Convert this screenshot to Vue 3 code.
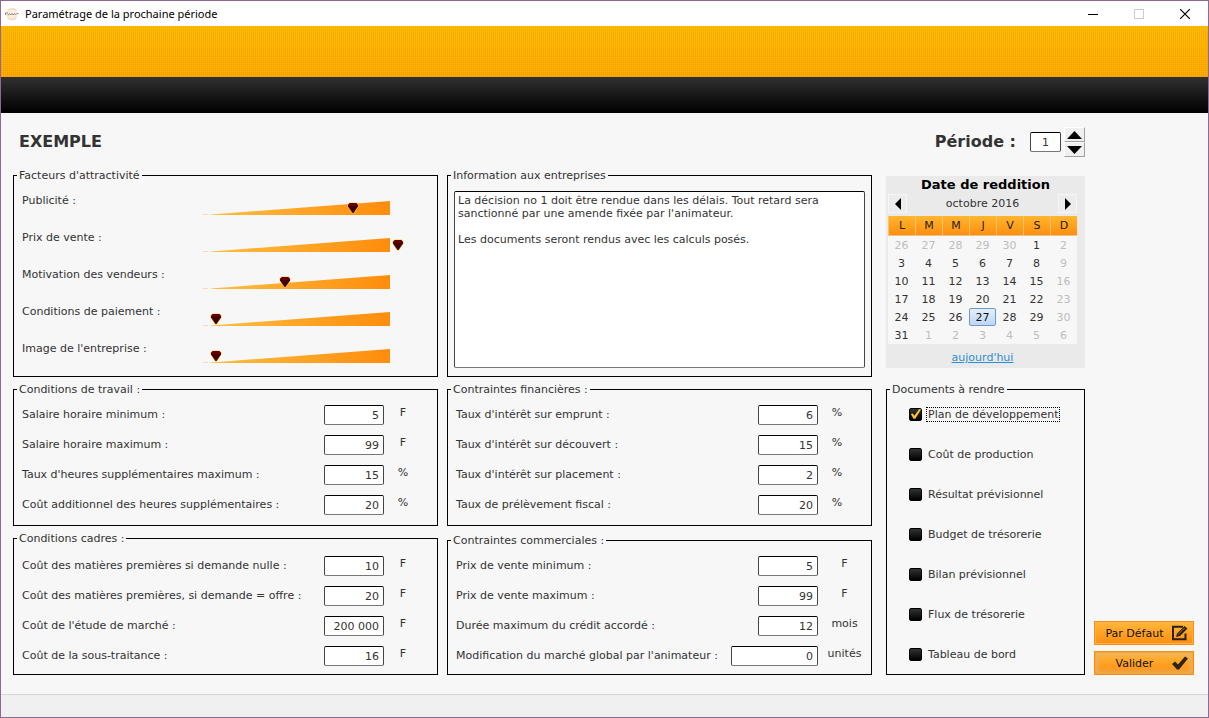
<script setup>
import { ref, reactive } from 'vue'

const period = ref(1)

const factors = reactive([
  { id: 'pub', label: 'Publicité :', value: 75 },
  { id: 'prix', label: 'Prix de vente :', value: 100 },
  { id: 'motiv', label: 'Motivation des vendeurs :', value: 38 },
  { id: 'paie', label: 'Conditions de paiement :', value: 0 },
  { id: 'image', label: "Image de l'entreprise :", value: 0 },
])

const info = ref(
  "La décision no 1 doit être rendue dans les délais. Tout retard sera sanctionné par une amende fixée par l'animateur.\n\nLes documents seront rendus avec les calculs posés."
)

const work = reactive([
  { id: 'smin', label: 'Salaire horaire minimum :', value: '5', unit: 'F' },
  { id: 'smax', label: 'Salaire horaire maximum :', value: '99', unit: 'F' },
  { id: 'hsup', label: "Taux d'heures supplémentaires maximum :", value: '15', unit: '%' },
  { id: 'csup', label: 'Coût additionnel des heures supplémentaires :', value: '20', unit: '%' },
])

const frame = reactive([
  { id: 'mp0', label: 'Coût des matières premières si demande nulle :', value: '10', unit: 'F' },
  { id: 'mp1', label: 'Coût des matières premières, si demande = offre :', value: '20', unit: 'F' },
  { id: 'etude', label: "Coût de l'étude de marché :", value: '200 000', unit: 'F' },
  { id: 'sst', label: 'Coût de la sous-traitance :', value: '16', unit: 'F' },
])

const finance = reactive([
  { id: 'emp', label: "Taux d'intérêt sur emprunt :", value: '6', unit: '%' },
  { id: 'dec', label: "Taux d'intérêt sur découvert :", value: '15', unit: '%' },
  { id: 'pla', label: "Taux d'intérêt sur placement :", value: '2', unit: '%' },
  { id: 'fisc', label: 'Taux de prélèvement fiscal :', value: '20', unit: '%' },
])

const trade = reactive([
  { id: 'pmin', label: 'Prix de vente minimum :', value: '5', unit: 'F' },
  { id: 'pmax', label: 'Prix de vente maximum :', value: '99', unit: 'F' },
  { id: 'cred', label: 'Durée maximum du crédit accordé :', value: '12', unit: 'mois' },
  { id: 'glob', label: "Modification du marché global par l'animateur :", value: '0', unit: 'unités', wide: true },
])

const documents = reactive([
  { id: 'plan', label: 'Plan de développement', checked: true, current: true },
  { id: 'cout', label: 'Coût de production', checked: false },
  { id: 'resu', label: 'Résultat prévisionnel', checked: false },
  { id: 'budg', label: 'Budget de trésorerie', checked: false },
  { id: 'bila', label: 'Bilan prévisionnel', checked: false },
  { id: 'flux', label: 'Flux de trésorerie', checked: false },
  { id: 'tabl', label: 'Tableau de bord', checked: false },
])

const weekdays = ['L', 'M', 'M', 'J', 'V', 'S', 'D']
const selectedDay = ref(27)

// October 2016: five days of September lead in, six of November follow.
const days = [
  ...[26, 27, 28, 29, 30].map((n) => ({ n, other: true })),
  ...Array.from({ length: 31 }, (_, i) => ({ n: i + 1, other: false })),
  ...[1, 2, 3, 4, 5, 6].map((n) => ({ n, other: true })),
]
const weeks = Array.from({ length: 6 }, (_, w) => days.slice(w * 7, w * 7 + 7))
</script>

<template>
  <div class="window">
    <header class="titlebar">
      <svg class="app-icon" viewBox="0 0 16 16" aria-hidden="true">
        <circle cx="8" cy="8" r="6" fill="#fbeee0" />
        <path d="M4 4.500A5.500 5.500 0 0 1 12.500 5M3.500 11.500A5.500 5.500 0 0 0 12.500 11" fill="none" stroke="#f6dcc0" stroke-width="1.500" />
        <path d="M1.500 9V7H4M4 9.500L5.500 7.500L6.500 9L8 7.500L9 9L10.500 7.500L11.500 9L13 7.500H14.500" fill="none" stroke="#8d8682" stroke-width="1" />
      </svg>
      <h1 class="window-title">Paramétrage de la prochaine période</h1>
      <button class="win-btn" type="button" aria-label="Réduire">
        <svg viewBox="0 0 10 10"><path d="M0 5.500H10" stroke="#000" fill="none" /></svg>
      </button>
      <button class="win-btn" type="button" aria-label="Agrandir" disabled>
        <svg viewBox="0 0 10 10"><rect x="0.500" y="0.500" width="9" height="9" stroke="#ccc" fill="none" /></svg>
      </button>
      <button class="win-btn" type="button" aria-label="Fermer">
        <svg viewBox="0 0 10 10"><path d="M0 0L10 10M10 0L0 10" stroke="#000" stroke-width="1.200" fill="none" /></svg>
      </button>
    </header>
    <div class="band-gold"></div>
    <div class="band-dark"></div>

    <main class="content">
      <div class="heading">
        <h2 class="heading-text">EXEMPLE</h2>
        <div class="period">
          <label class="heading-text" for="period">Période :</label>
          <input id="period" v-model="period" class="field period-field" type="text" />
          <div class="spinner">
            <button type="button" aria-label="Période suivante" @click="period++">
              <svg viewBox="0 0 15 8"><path d="M7.500 0L15 8H0Z" /></svg>
            </button>
            <button type="button" aria-label="Période précédente" @click="period--">
              <svg viewBox="0 0 15 8"><path d="M0 0H15L7.500 8Z" /></svg>
            </button>
          </div>
        </div>
      </div>

      <div class="stack">
        <fieldset class="panel panel-factors">
          <legend>Facteurs d'attractivité</legend>
          <div v-for="f in factors" :key="f.id" class="factor">
            <label :for="f.id">{{ f.label }}</label>
            <div class="slider">
              <svg class="wedge" viewBox="0 0 187 14" aria-hidden="true">
                <defs>
                  <linearGradient :id="'g-' + f.id" x1="0" x2="1">
                    <stop offset="0" stop-color="#ffbe40" />
                    <stop offset="1" stop-color="#ff8c0c" />
                  </linearGradient>
                </defs>
                <rect x="0" y="13" width="5" height="1" fill="#fbdcae" />
                <path d="M8 13.400L187 0V14H8Z" :fill="'url(#g-' + f.id + ')'" />
              </svg>
              <input :id="f.id" v-model="f.value" type="range" min="0" max="100" />
            </div>
          </div>
        </fieldset>

        <fieldset class="panel">
          <legend>Conditions de travail :</legend>
          <div v-for="r in work" :key="r.id" class="row">
            <label :for="r.id">{{ r.label }}</label>
            <input :id="r.id" v-model="r.value" class="field" type="text" />
            <span class="unit">{{ r.unit }}</span>
          </div>
        </fieldset>

        <fieldset class="panel panel-last panel-roomy">
          <legend>Conditions cadres :</legend>
          <div v-for="r in frame" :key="r.id" class="row">
            <label :for="r.id">{{ r.label }}</label>
            <input :id="r.id" v-model="r.value" class="field" type="text" />
            <span class="unit">{{ r.unit }}</span>
          </div>
        </fieldset>
      </div>

      <div class="stack">
        <fieldset class="panel panel-info">
          <legend>Information aux entreprises</legend>
          <textarea v-model="info" aria-label="Information aux entreprises" spellcheck="false"></textarea>
        </fieldset>

        <fieldset class="panel">
          <legend>Contraintes financières :</legend>
          <div v-for="r in finance" :key="r.id" class="row">
            <label :for="r.id">{{ r.label }}</label>
            <input :id="r.id" v-model="r.value" class="field" type="text" />
            <span class="unit">{{ r.unit }}</span>
          </div>
        </fieldset>

        <fieldset class="panel panel-last">
          <legend>Contraintes commerciales :</legend>
          <div v-for="r in trade" :key="r.id" class="row">
            <label :for="r.id">{{ r.label }}</label>
            <input :id="r.id" v-model="r.value" class="field" :class="{ 'field-wide': r.wide }" type="text" />
            <span class="unit unit-wide">{{ r.unit }}</span>
          </div>
        </fieldset>
      </div>

      <div class="stack stack-side">
        <section class="calendar">
          <h3>Date de reddition</h3>
          <div class="month">
            <button type="button" aria-label="Mois précédent">
              <svg viewBox="0 0 6 12"><path d="M6 0V12L0 6Z" /></svg>
            </button>
            <span>octobre 2016</span>
            <button type="button" aria-label="Mois suivant">
              <svg viewBox="0 0 6 12"><path d="M0 0V12L6 6Z" /></svg>
            </button>
          </div>
          <table>
            <thead>
              <tr>
                <th v-for="(d, i) in weekdays" :key="i" scope="col">{{ d }}</th>
              </tr>
            </thead>
            <tbody>
              <tr v-for="(week, w) in weeks" :key="w">
                <td
                  v-for="(d, i) in week"
                  :key="i"
                  :class="{ muted: d.other || i === 6, selected: !d.other && d.n === selectedDay }"
                >{{ d.n }}</td>
              </tr>
            </tbody>
          </table>
          <a class="today" href="#">aujourd'hui</a>
        </section>

        <fieldset class="panel panel-docs">
          <legend>Documents à rendre</legend>
          <label v-for="d in documents" :key="d.id" class="doc" :class="{ current: d.current }">
            <input v-model="d.checked" type="checkbox" />
            <span>{{ d.label }}</span>
          </label>
        </fieldset>
      </div>

      <div class="actions">
        <button type="button" class="action">
          <span>Par Défaut</span>
          <svg viewBox="0 0 18 16" aria-hidden="true">
            <path d="M12 1.800H2V14.200H14.500V8.500" fill="none" stroke="#2b2110" stroke-width="2" />
            <path d="M5 12L6 8.500L13.500 1L16.500 3.500L9 11Z" fill="#2b2110" />
            <path d="M7 9.500L13.500 3" stroke="#c98522" stroke-width="0.800" />
          </svg>
        </button>
        <button type="button" class="action action-default">
          <span>Valider</span>
          <svg viewBox="0 0 18 16" aria-hidden="true">
            <path d="M1 9L4 6.500L7 9.500L14 1.500L17 3.500L8 14.500H6Z" fill="#2b2418" />
          </svg>
        </button>
      </div>
    </main>

    <footer class="statusbar"></footer>
  </div>
</template>

<style>
body {
  background: #f7f7f7;
}
</style>

<style scoped>
.window {
  box-sizing: border-box;
  min-height: 100vh;
  display: flex;
  flex-direction: column;
  border: 1px solid #91679a;
  background: #f7f7f7;
  color: #333;
  font: 11px/13px Verdana, "DejaVu Sans", sans-serif;
}

.window *,
.window *::before {
  box-sizing: border-box;
}

button,
input,
textarea {
  margin: 0;
  padding: 0;
  font: inherit;
  color: inherit;
}

h1,
h2,
h3 {
  margin: 0;
}

.titlebar {
  display: flex;
  align-items: center;
  height: 25px;
  padding-left: 3px;
  background: #fff;
  color: #000;
}

.app-icon {
  width: 16px;
  height: 16px;
  margin-right: 5px;
}

.window-title {
  flex: 1;
  font: 400 11px/16px "Segoe UI", "Noto Sans", sans-serif;
}

.win-btn {
  display: flex;
  align-items: center;
  justify-content: center;
  width: 46px;
  height: 25px;
  border: 0;
  background: none;
}

.win-btn svg {
  width: 10px;
  height: 10px;
}

.band-gold {
  height: 51px;
  background:
    repeating-linear-gradient(0deg, transparent 0 1px, rgba(255, 182, 0, 0.6) 1px 2px),
    repeating-linear-gradient(90deg, rgba(225, 130, 0, 0.4) 0 1px, transparent 1px 2px),
    linear-gradient(#ffc400, #ffa800);
}

.band-dark {
  height: 36px;
  background: linear-gradient(#303030, #000);
}

.content {
  flex: 1;
  display: grid;
  grid-template-columns: minmax(0, 425fr) minmax(0, 425fr) minmax(0, 204fr) 100px;
  grid-template-rows: 56px auto;
  align-content: start;
  column-gap: 9px;
  padding: 0 14px 19px 12px;
}

.heading {
  grid-column: 1 / -1;
  display: flex;
  align-items: center;
  justify-content: space-between;
  padding: 2px 109px 0 6px;
}

.heading-text {
  font-size: 16px;
  font-weight: 700;
  line-height: 20px;
}

.period {
  display: flex;
  align-items: center;
}

.field {
  width: 60px;
  height: 20px;
  padding: 1px 4px 0 2px;
  border: 1px solid #444;
  border-top-color: #000;
  border-bottom-color: #777;
  border-radius: 2px;
  background: #fff;
  text-align: right;
}

.field-wide {
  width: 87px;
}

.period-field {
  width: 31px;
  margin: 0 3px 0 14px;
  padding: 0 2px;
  text-align: center;
}

.spinner {
  display: flex;
  flex-direction: column;
}

.spinner button {
  display: flex;
  align-items: center;
  justify-content: center;
  width: 21px;
  height: 15px;
  border: 1px solid #fff;
  border-right-color: #a0a0a0;
  border-bottom-color: #a0a0a0;
  background: #f0f0f0;
}

.spinner svg {
  width: 15px;
  height: 8px;
}

.stack {
  display: flex;
  flex-direction: column;
  gap: 6px;
}

.stack-side {
  padding: 7px 0 0 5px;
}

.panel {
  min-width: 0;
  margin: 0;
  padding: 9px 0 10px 8px;
  border: 1px solid #000;
}

.stack-side .panel,
.panel-last {
  margin-top: auto;
}

.panel-last {
  padding-bottom: 8px;
}

.panel-roomy {
  padding-top: 11px;
}

.panel legend {
  margin-left: -5px;
  padding: 0 2px;
}

.panel-factors {
  padding: 0 33px 9px 8px;
}

.factor {
  display: grid;
  grid-template-columns: 1fr 201px;
  align-items: center;
  height: 37px;
}

.slider {
  display: grid;
  align-items: center;
  padding-top: 15px;
}

.wedge {
  grid-area: 1 / 1;
  width: 187px;
  height: 14px;
}

.slider input {
  grid-area: 1 / 1;
  justify-self: end;
  width: 194px;
  height: 12px;
  appearance: none;
  background: none;
}

.slider input::-webkit-slider-thumb {
  appearance: none;
  width: 12px;
  height: 12px;
  background: url("data:image/svg+xml,%3Csvg xmlns='http://www.w3.org/2000/svg' viewBox='0 0 12 12'%3E%3Cpath d='M2.500 .500H9.500L11.500 2.500V4.500L7 11.500H5L.500 4.500V2.500Z' fill='%23ffc54a'/%3E%3Cpath d='M3 1H9L11 3V4.500L6.500 11H5.500L1 4.500V3Z' fill='%23400000'/%3E%3Cpath d='M3 1H9L11 3V4H1V3Z' fill='%23640000'/%3E%3C/svg%3E") center / 12px 12px no-repeat;
}

.row {
  display: flex;
  align-items: flex-start;
}

.row + .row {
  margin-top: 10px;
}

.row label {
  flex: 1;
  line-height: 20px;
  white-space: nowrap;
}

.unit {
  width: 53px;
  padding-right: 15px;
  line-height: 16px;
  text-align: center;
}

.unit-wide {
  padding-right: 0;
}

.panel-info {
  padding: 9px 6px 8px;
}

.panel-info legend {
  margin-left: -3px;
}

.panel-info textarea {
  display: block;
  width: 100%;
  height: 177px;
  padding: 2px 3px;
  border: 1px solid #444;
  border-top-color: #000;
  border-bottom-color: #777;
  border-radius: 2px;
  background: #fff;
  resize: none;
}

.calendar {
  display: flex;
  flex-direction: column;
  height: 192px;
  padding: 0 8px 0 2px;
  background: #eaeaea;
}

.calendar h3 {
  padding-left: 6px;
  color: #000;
  font-size: 13px;
  line-height: 18px;
  text-align: center;
}

.month {
  display: flex;
  align-items: center;
  justify-content: space-between;
  margin-bottom: 3px;
}

.month button {
  display: flex;
  align-items: center;
  justify-content: center;
  width: 19px;
  height: 19px;
  border: 1px solid #f6f6f6;
  background: #ececec;
}

.month svg {
  width: 6px;
  height: 12px;
}

.calendar table {
  width: 100%;
  table-layout: fixed;
  border-collapse: separate;
  border-spacing: 0;
  background: #f7f7f7;
  text-align: center;
}

.calendar th {
  height: 20px;
  padding: 0;
  border-left: 1px solid #ffc266;
  border-bottom: 1px solid #e8c090;
  background: linear-gradient(#ffb52e, #ff8f0f);
  color: #222;
  font-weight: 400;
}

.calendar td {
  height: 18px;
  padding: 0;
}

.calendar .muted {
  color: #bdbdbd;
}

.calendar .selected {
  border: 1px solid #6f98c8;
  border-radius: 2px;
  background: linear-gradient(#e4eefb, #bcd7f7);
  color: #111;
}

.today {
  margin-top: 7px;
  color: #2a8fd0;
  text-align: center;
}

.panel-docs {
  padding: 8px 0 10px 22px;
}

.panel-docs legend {
  margin-left: -19px;
}

.doc {
  display: flex;
  align-items: center;
  gap: 5px;
  height: 20px;
}

.doc + .doc {
  margin-top: 20px;
}

.doc input {
  appearance: none;
  display: grid;
  width: 13px;
  height: 13px;
  border: 1px solid #000;
  border-radius: 2px;
  background: linear-gradient(#333, #000);
}

.doc input:checked::before {
  content: "";
  width: 11px;
  height: 11px;
  background: #ffc52e;
  clip-path: polygon(8% 50%, 26% 45%, 40% 66%, 84% 4%, 100% 10%, 48% 94%, 32% 94%);
}

.doc span {
  padding: 0 1px;
}

.doc.current span {
  outline: 1px dotted #000;
}

.actions {
  align-self: end;
  display: flex;
  flex-direction: column;
  gap: 6px;
}

.action {
  display: flex;
  align-items: center;
  height: 24px;
  padding: 0 4px 0 3px;
  border: 1px solid #ff8c10;
  background: linear-gradient(#ffb73a, #ff8e10);
  box-shadow: inset 0 0 0 1px #ffb24a;
  color: #111;
}

.action span {
  flex: 1;
  text-align: center;
}

.action svg {
  width: 18px;
  height: 16px;
}

.action-default {
  box-shadow: inset 0 0 0 1px #ffa52e, inset 0 0 5px 2px #d9b884;
}

.statusbar {
  height: 23px;
  border-top: 1px solid #d7d7d7;
  background: #f0f0f0;
}
</style>
